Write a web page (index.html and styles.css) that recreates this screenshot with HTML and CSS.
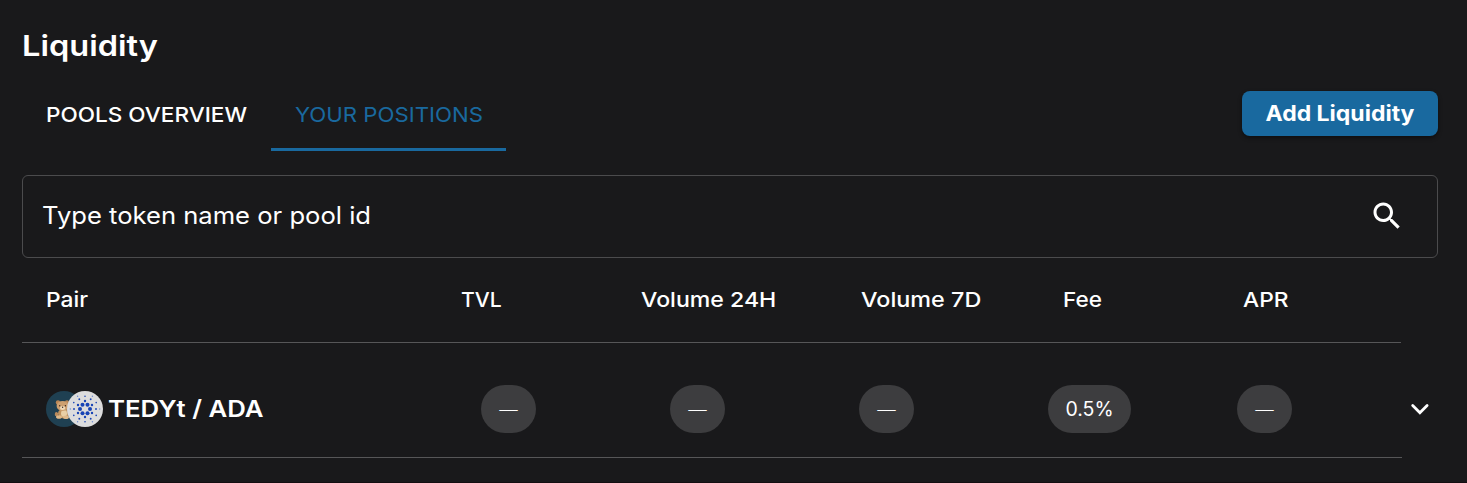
FILE: index.html
```html
<!DOCTYPE html>
<html lang="en">
<head>
<meta charset="utf-8">
<title>Liquidity</title>
<link rel="stylesheet" href="styles.css">
</head>
<body>
<main class="page">
  <h1 class="title"><span class="title-text">Liquidity</span></h1>
  <div class="toolbar">
    <nav class="tabs">
      <a class="tab"><span class="tab-a">POOLS OVERVIEW</span></a>
      <a class="tab tab-active"><span class="tab-b">YOUR POSITIONS</span></a>
    </nav>
    <button class="add"><span class="add-text">Add Liquidity</span></button>
  </div>
  <div class="search">
    <span class="placeholder">Type token name or pool id</span>
    <svg class="search-icon" width="36" height="36" viewBox="0 0 24 24" fill="#fff"><path d="M15.5 14h-.79l-.28-.27C15.41 12.59 16 11.11 16 9.5 16 5.91 13.09 3 9.5 3S3 5.91 3 9.5 5.91 16 9.5 16c1.61 0 3.09-.59 4.23-1.57l.27.28v.79l5 4.99L20.49 19l-4.99-5zm-6 0C7.01 14 5 11.99 5 9.5S7.01 5 9.5 5 14 7.01 14 9.5 11.99 14 9.5 14z"/></svg>
  </div>
  <div class="head">
    <span class="h-pair">Pair</span><span class="h-tvl">TVL</span><span class="h-v24">Volume 24H</span><span class="h-v7">Volume 7D</span><span class="h-fee">Fee</span><span class="h-apr">APR</span>
  </div>
  <div class="row">
    <div class="cells">
      <div class="pair">
        <svg class="coins" width="58" height="36" viewBox="0 0 58 36">
          <circle cx="18" cy="18" r="18" fill="#1f4052"/>
          <g>
            <path d="M12 25Q8 26 9 22Q10 20 12 22Z" fill="#b98a5c"/>
            <ellipse cx="17.5" cy="22.5" rx="5.5" ry="5" fill="#c1935f"/>
            <ellipse cx="18" cy="22.5" rx="3" ry="3.4" fill="#ead0a6"/>
            <circle cx="12" cy="11.5" r="2.2" fill="#b98656"/>
            <circle cx="21" cy="11.5" r="2.2" fill="#b98656"/>
            <ellipse cx="16.6" cy="15" rx="6" ry="5" fill="#cda070"/>
            <ellipse cx="16.6" cy="17" rx="2.7" ry="2" fill="#f0dab8"/>
            <circle cx="13.7" cy="14.8" r=".7" fill="#3b281e"/>
            <circle cx="19.4" cy="14.8" r=".7" fill="#3b281e"/>
            <circle cx="16.6" cy="16.2" r=".7" fill="#3b281e"/>
            <ellipse cx="13" cy="26" rx="3" ry="1.8" fill="#dfb98a"/>
            <ellipse cx="20" cy="26.2" rx="3" ry="1.8" fill="#dfb98a"/>
          </g>
          <circle cx="39" cy="18" r="18" fill="#dcdcdd"/>
          <g fill="#1743b5">
            <circle cx="44" cy="18" r="2"/><circle cx="41.5" cy="22.3" r="2"/><circle cx="36.5" cy="22.3" r="2"/><circle cx="34" cy="18" r="2"/><circle cx="36.5" cy="13.7" r="2"/><circle cx="41.5" cy="13.7" r="2"/>
            <circle cx="39" cy="10" r="1.2"/><circle cx="46" cy="14" r="1.2"/><circle cx="46" cy="22" r="1.2"/><circle cx="39" cy="26" r="1.2"/><circle cx="32" cy="22" r="1.2"/><circle cx="32" cy="14" r="1.2"/>
            <circle cx="50" cy="18" r=".95"/><circle cx="44.7" cy="8.3" r=".95"/><circle cx="33.3" cy="8.3" r=".95"/><circle cx="28" cy="18" r=".95"/><circle cx="33.3" cy="27.7" r=".95"/><circle cx="44.7" cy="27.7" r=".95"/>
            <circle cx="39" cy="5.2" r=".8"/><circle cx="50.2" cy="11.6" r=".8"/><circle cx="50.2" cy="24.4" r=".8"/><circle cx="39" cy="30.8" r=".8"/><circle cx="27.8" cy="24.4" r=".8"/><circle cx="27.8" cy="11.6" r=".8"/>
          </g>
          <g fill="#6f8bd0"><circle cx="53.7" cy="18" r=".7"/><circle cx="46.4" cy="5.2" r=".7"/><circle cx="31.6" cy="5.2" r=".7"/><circle cx="24.3" cy="18" r=".7"/><circle cx="31.6" cy="30.8" r=".7"/><circle cx="46.4" cy="30.8" r=".7"/></g>
        </svg>
        <span class="pair-name">TEDYt / ADA</span>
      </div>
      <div><span class="pill">—</span></div>
      <div><span class="pill">—</span></div>
      <div><span class="pill">—</span></div>
      <div><span class="pill pill-fee"><span class="fee">0.5%</span></span></div>
      <div><span class="pill">—</span></div>
    </div>
    <svg class="chevron" width="36" height="36" viewBox="0 0 36 36" fill="none" stroke="#fff" stroke-width="2.8" stroke-linecap="round" stroke-linejoin="miter"><path d="M10.7 14.5l7.2 7.2 7.2-7.2"/></svg>
  </div>
</main>
</body>
</html>
```
FILE: styles.css
```css
* { box-sizing: border-box; }
body { margin: 0; background: #19191b; color: #fff; font-family: Inter, "Liberation Sans", sans-serif; overflow: hidden; }
span { white-space: nowrap; display: inline-block; transform-origin: left center; }
.page { width: 1467px; height: 483px; padding: 25px 29px 0 22px; border-bottom: 1px solid #130e11; }
.title { margin: 0; height: 40px; font-size: 29px; line-height: 41px; font-weight: 600; }
.title-text { transform: scaleX(1.122); }
.toolbar { display: flex; justify-content: space-between; height: 86px; padding-top: 14px; }
.tabs { display: flex; }
.tab { height: 72px; width: 249px; padding-left: 24px; line-height: 71px; font-size: 20.5px; font-weight: 500; }
.tab-active { width: 235px; border-bottom: 3px solid #19699f; color: #19699f; font-weight: 400; }
.tab-a { transform: scaleX(1.1); }
.tab-b { transform: scaleX(1.083); }
.add { margin-top: 12px; width: 196px; height: 45px; padding: 0; border: 0; border-radius: 8px; background: #19699f; color: #fff; font: 700 21px/43px Inter, sans-serif; box-shadow: 0 2px 4px rgba(0,0,0,.45); }
.add-text { transform: scaleX(1.096); transform-origin: center; }
.search { margin-top: 24px; height: 83px; border: 1px solid #4b4b4d; border-radius: 6px; display: flex; align-items: center; justify-content: space-between; padding: 0 32px 2px 19px; }
.placeholder { font-size: 24px; line-height: 36px; transform: scaleX(1.066); }
.head { width: 1379px; height: 85px; padding-left: 24px; display: grid; grid-template-columns: 414.5px 180.5px 219.5px 202.5px 180px 1fr; justify-items: start; border-bottom: 1px solid #565658; line-height: 83px; font-size: 20.5px; font-weight: 500; }
.h-pair { transform: scaleX(1.11); }
.h-tvl { transform: scaleX(1.03); }
.h-v24 { transform: scaleX(1.127); }
.h-v7 { transform: scaleX(1.14); }
.h-fee { transform: scaleX(1.1); }
.h-apr { transform: scaleX(1.11); }
.row { display: flex; height: 115px; }
.cells { width: 1380px; flex: none; padding: 18px 0 0 24px; display: grid; grid-template-columns: 435px repeat(4, 189px) 1fr; align-items: center; border-bottom: 1px solid #565658; }
.pair { display: flex; align-items: center; gap: 4px; }
.pair-name { font-size: 23px; line-height: 36px; font-weight: 600; transform: scaleX(1.12); }
.pill { display: flex; align-items: center; justify-content: center; width: 55px; height: 48px; border-radius: 24px; background: #3d3d3f; font: 300 20px/48px "Open Sans", sans-serif; }
.pill-fee { width: 83px; font-family: Inter, sans-serif; font-weight: 400; font-size: 19.5px; line-height: 47px; }
.chevron { margin: 48px 0 0 0; flex: none; }
```
